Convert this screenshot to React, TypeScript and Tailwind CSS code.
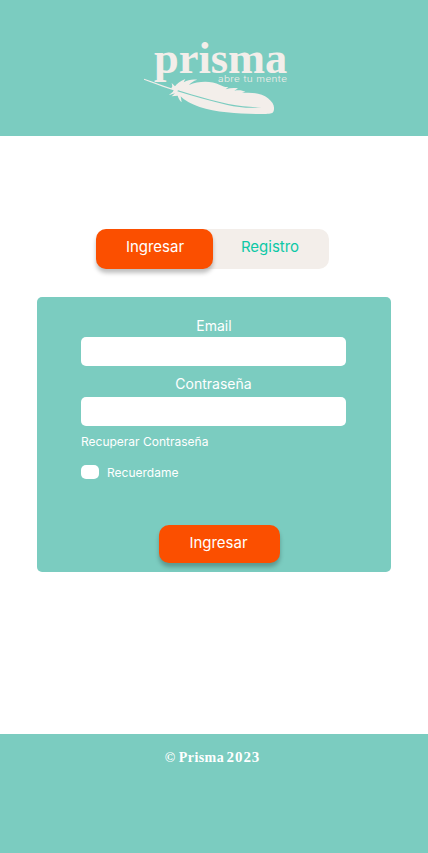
function Logo() {
  return (
    <svg viewBox="0 0 480 258" className="h-[86px] w-[160px] overflow-visible" fill="#f3eeea" role="img" aria-label="prisma">
      <text x="54" y="112" fontSize="136" fontWeight="700" textLength="400" fontFamily="'Liberation Serif', serif" lengthAdjust="spacingAndGlyphs">prisma</text>
      <text x="246" y="138" fontSize="27" fontWeight="300" textLength="208" lengthAdjust="spacingAndGlyphs" letterSpacing="1" fontFamily="Inter, sans-serif">abre tu mente</text>
      <path d="M24 128 C50 137 79 147 106 157 L109 151 L107 141 L117 151 C121 146 129 136 148 129 L143 139 C156 131 169 129 184 131 C171 135 164 141 159 147 C187 136 223 133 252 147 C261 151 267 154 277 153 L269 160 C282 156 294 155 306 157 L295 164 C309 161 320 163 328 167 L318 171 C350 168 378 172 396 187 C411 199 417 211 413 225 C411 232 404 233 390 234 C330 235 246 231 191 213 C165 204 145 193 134 181 L137 199 C131 194 127 185 125 179 L107 181 L117 172 L98 178 L110 168 L113 163 L101 159 C73 149 47 140 24 131 Z" />
      <path d="M126 163 C180 180 226 193 277 204 C315 211 350 214 377 214 C343 218 306 214 274 207 C221 195 175 181 124 166 Z" fill="#7bccc0" />
    </svg>
  );
}

function Field({ id, label, type, className }: { id: string; label: string; type: string; className: string }) {
  return (
    <div className="flex flex-col">
      <label htmlFor={id} className={className}>{label}</label>
      <input id={id} type={type} className="h-[29px] w-[265px] rounded-[5px] bg-white px-2 text-black outline-none" />
    </div>
  );
}

export default function App() {
  return (
    <div className="flex h-[853px] w-[428px] flex-col bg-white font-['Inter',sans-serif] font-normal text-white">
      <header className="flex h-[136px] shrink-0 justify-center bg-[#7bccc0] pt-9 pl-1">
        <Logo />
      </header>
      <main className="flex h-[598px] flex-col pt-[93px]">
        <nav className="ml-24 flex h-10 w-[233px] rounded-[10px] bg-[#f3eeea]">
          <button className="h-10 w-[117px] rounded-[10px] bg-[#fb4f00] pb-[3px] pl-px text-[15px] shadow-[0_4px_4px_rgba(0,0,0,0.25)]">Ingresar</button>
          <button className="h-10 w-[114px] pb-[3px] text-[15px] text-[#0cc8a6]">Registro</button>
        </nav>
        <form className="mt-7 ml-[37px] flex h-[275px] w-[354px] flex-col rounded-[5px] bg-[#7bccc0] pl-11">
          <Field id="email" label="Email" type="email" className="h-10 w-[265px] pt-[19px] pl-px text-center text-sm leading-5" />
          <Field id="password" label="Contraseña" type="password" className="h-[31px] w-[265px] pt-2 text-center text-sm leading-5" />
          <a className="mt-2 text-xs leading-4">Recuperar Contraseña</a>
          <label className="mt-[15px] flex h-[14px] items-center gap-2 text-xs leading-4">
            <input type="checkbox" className="h-[14px] w-[18px] appearance-none rounded-[5px] bg-white" />
            <span className="pt-px">Recuerdame</span>
          </label>
          <button type="button" className="mt-[46px] ml-[78px] h-[38px] w-[121px] rounded-[10px] bg-[#fb4f00] pr-[2px] pb-px text-[15px] shadow-[0_4px_4px_rgba(0,0,0,0.25)]">Ingresar</button>
        </form>
      </main>
      <footer className="h-[119px] bg-[#7bccc0] pt-[13px] pr-[3px] text-center font-['Liberation_Serif',serif] text-sm font-bold leading-5">
        © <span className="tracking-[0.03em]">Prisma</span> <span className="-ml-px text-[15px] tracking-[0.06em]">2023</span>
      </footer>
    </div>
  );
}
